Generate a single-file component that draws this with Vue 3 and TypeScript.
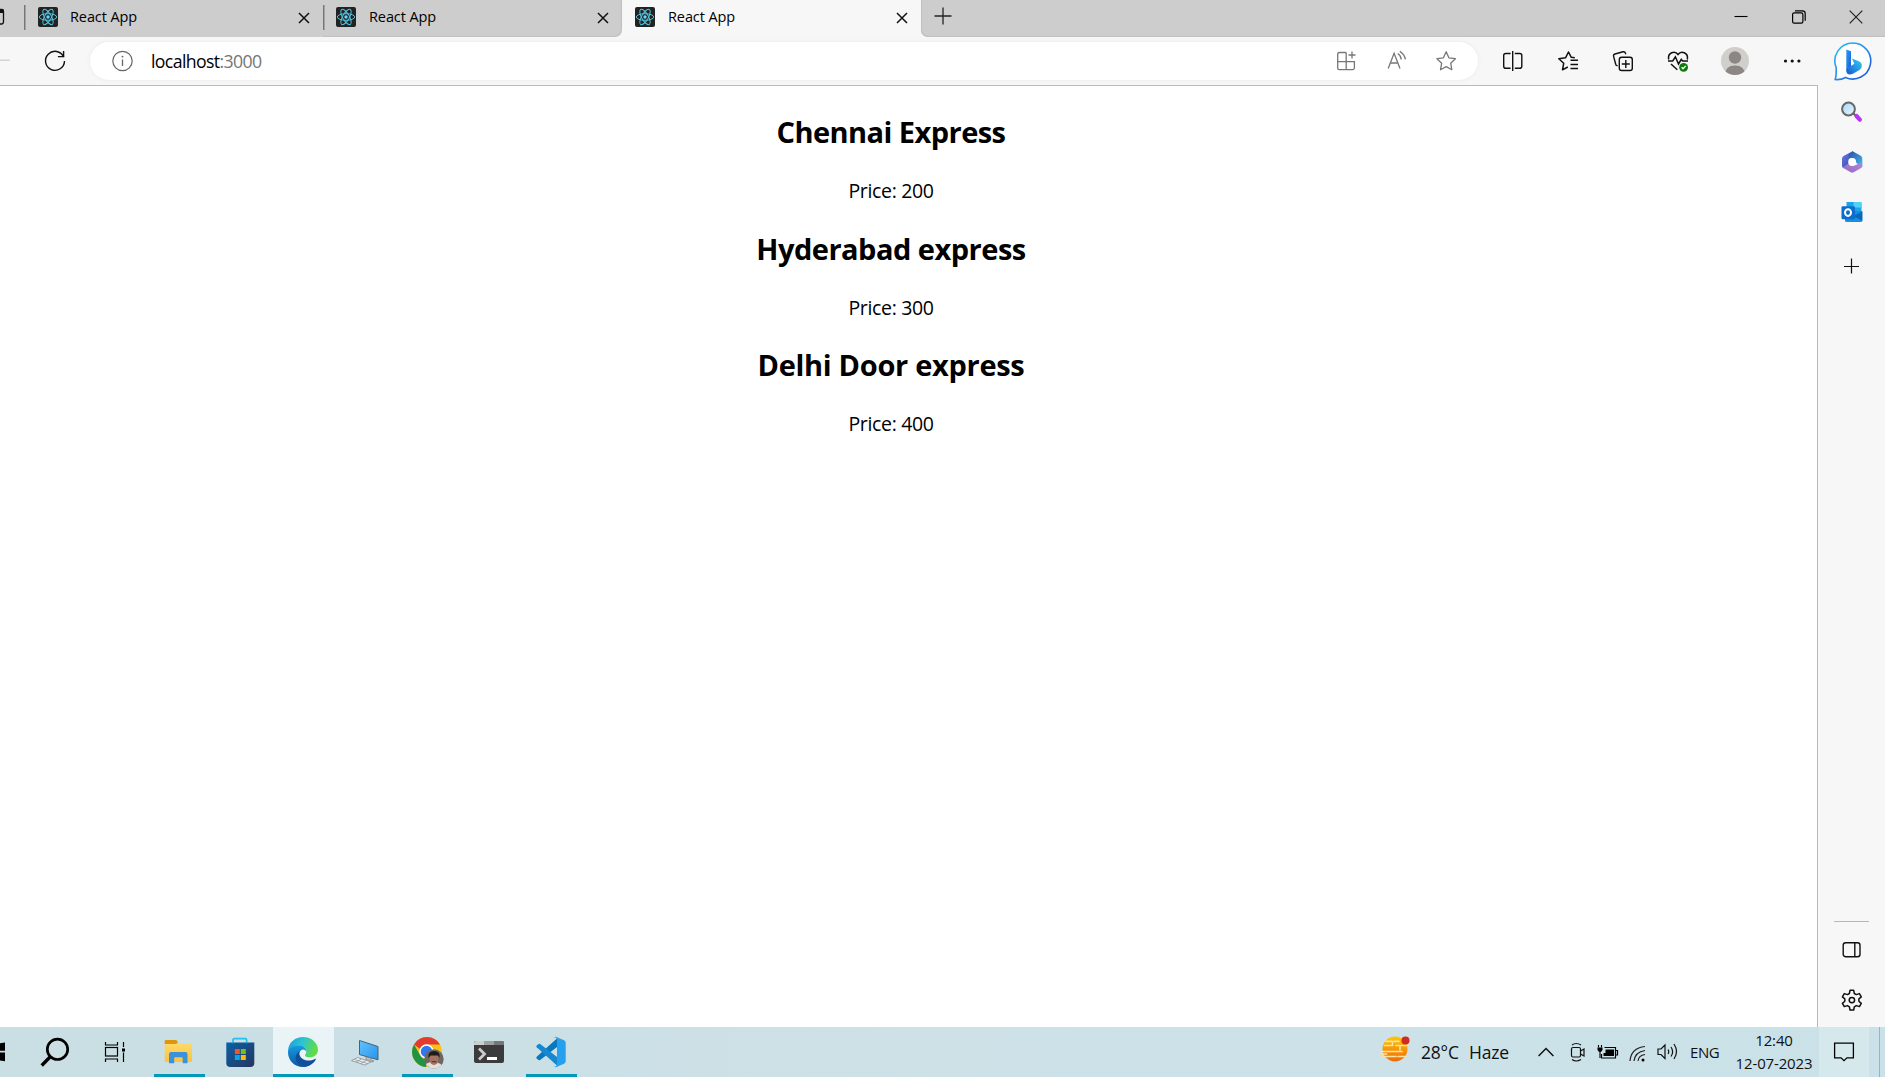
<script setup lang="ts">
interface Tab {
  title: string
  active: boolean
}

interface Train {
  name: string
  price: number
  spacing: string
}

const tabs: Tab[] = [
  { title: 'React App', active: false },
  { title: 'React App', active: false },
  { title: 'React App', active: true },
]

const trains: Train[] = [
  { name: 'Chennai Express', price: 200, spacing: 'first' },
  { name: 'Hyderabad express', price: 300, spacing: 'second' },
  { name: 'Delhi Door express', price: 400, spacing: 'third' },
]
</script>

<template>
  <div class="screen">
    <header class="titlebar">
      <div class="lead">
        <svg width="5" height="18" viewBox="0 0 5 18"><path d="M0 1.5h1.500Q3.500 1.500 3.500 4v9.500Q3.500 16 1.500 16H0" fill="none" stroke="#111" stroke-width="1.300" /><path d="M0 1h3.500v4H0z" fill="#111" /></svg>
      </div>
      <div v-for="(tab, i) in tabs" :key="i" class="tab" :class="{ active: tab.active, before: i === 1 }">
        <svg class="favicon" width="20" height="20" viewBox="0 0 20 20">
          <rect width="20" height="20" rx="2" fill="#222" />
          <g fill="none" stroke="#53c1de" stroke-width="1">
            <ellipse cx="10" cy="10" rx="8.700" ry="3.300" />
            <ellipse cx="10" cy="10" rx="8.700" ry="3.300" transform="rotate(60 10 10)" />
            <ellipse cx="10" cy="10" rx="8.700" ry="3.300" transform="rotate(120 10 10)" />
          </g>
          <circle cx="10" cy="10" r="1.700" fill="#61dafb" />
        </svg>
        <span class="tab-title">{{ tab.title }}</span>
        <svg class="tab-close" width="12" height="12" viewBox="0 0 12 12"><path d="M1 1l10 10M11 1L1 11" stroke="#111" stroke-width="1.500" /></svg>
      </div>
      <div class="strip-end">
        <svg class="new-tab" width="18" height="18" viewBox="0 0 18 18"><path d="M9 .5v17M.5 9h17" stroke="#222" stroke-width="1.300" /></svg>
        <div class="window-buttons">
          <svg width="14" height="14" viewBox="0 0 14 14"><path d="M.5 6.500h13" stroke="#000" stroke-width="1.100" /></svg>
          <svg width="14" height="14" viewBox="0 0 14 14"><rect x=".6" y="2.900" width="10.300" height="10.300" rx="1.600" fill="none" stroke="#000" stroke-width="1.200" /><path d="M3 .8h7.500q2.700 0 2.700 2.700v7.300" fill="none" stroke="#000" stroke-width="1.200" /></svg>
          <svg width="14" height="14" viewBox="0 0 14 14"><path d="M.7.700l12.600 12.600M13.300.700L.7 13.300" stroke="#222" stroke-width="1.200" /></svg>
        </div>
      </div>
    </header>

    <div class="toolbar">
      <svg class="back" width="10" height="24" viewBox="0 0 10 24"><path d="M0 11.200h10" stroke="#cfcfcf" stroke-width="1.300" /></svg>
      <svg class="refresh" width="24" height="24" viewBox="0 0 24 24"><g fill="none" stroke="#111" stroke-width="1.400"><path d="M20.700 8A9.500 9.500 0 1 0 21.500 12" /><path d="M20.600 2v5.600h-5.700" /></g></svg>
      <div class="address">
        <svg width="24" height="24" viewBox="0 0 24 24"><circle cx="12.500" cy="12" r="9.700" fill="none" stroke="#666" stroke-width="1.200" /><path d="M12.500 10.500v6.500" stroke="#666" stroke-width="1.300" /><circle cx="12.500" cy="7.700" r=".9" fill="#666" /></svg>
        <span class="url">localhost<span class="port">:3000</span></span>
        <div class="address-icons">
          <svg width="24" height="24" viewBox="0 0 24 24" fill="none" stroke="#777" stroke-width="1.300"><path d="M12.200 3.500H5.400q-1.700 0-1.700 1.700v14q0 1.400 1.500 1.400h13.700q1.500 0 1.500-1.500v-6.500H3.700M12.200 3.500v17.100M18 2.500v7M14.500 6h7" /></svg>
          <svg width="24" height="24" viewBox="0 0 24 24" fill="none" stroke="#777" stroke-width="1.300"><path d="M4.200 19.600L10.100 4.300l5.900 15.300M6.400 14h7.500M13.800 4.500q3.100 2 3.500 6M15.800 2.400q4.800 3 5.600 8" /></svg>
          <svg width="24" height="24" viewBox="0 0 24 24"><path d="M12.200 2.800l2.700 6 6.500.9-4.700 4.500 1.100 6.500-5.600-3.100-5.700 3.100 1.200-6.500L2.900 9.700l6.500-.9z" fill="none" stroke="#777" stroke-width="1.300" stroke-linejoin="round" /></svg>
        </div>
      </div>
      <div class="actions">
        <svg width="24" height="24" viewBox="0 0 24 24" fill="none" stroke="#111" stroke-width="1.400"><path d="M9.600 4.500H4.800Q2.700 4.500 2.700 6.600v10.600q0 2.100 2.100 2.100h4.800M13.800 4.500h4.900q2.100 0 2.100 2.100v10.600q0 2.100-2.100 2.100h-4.900M11.700 2v20" /></svg>
        <svg width="24" height="24" viewBox="0 0 24 24" fill="none" stroke="#111" stroke-width="1.500"><path d="M18.800 8.800l-3.500-.5L12.500 3 9.500 8.800l-6.700.9 4.900 4.600-1.200 6.500 5.300-2.800M14.500 11.300H22M14.500 15.500H22M14.500 19.500H22" stroke-linejoin="round" /></svg>
        <svg width="24" height="24" viewBox="0 0 24 24" fill="none" stroke="#111" stroke-width="1.400"><rect x="8.300" y="8.300" width="13" height="13.200" rx="2.300" /><path d="M14.800 11v8M10.800 15h8M14.800 5.300l-.4-1.200q-.5-1.800-2.400-1.300L4 5q-1.900.5-1.400 2.400l2.100 7.800q.5 1.700 2 1.400" /></svg>
        <svg width="24" height="24" viewBox="0 0 24 24" fill="none" stroke="#111" stroke-width="1.500"><path d="M2.700 10.500C1.300 3.500 9 1.300 12 5.500c3-4.200 10.700-2 9.300 5M2 11.900h4.700l2.700-4.100 3.100 7.200 2.800-4.700 1.300 1.600H22M5 15l6.300 5.800" /><circle cx="17.600" cy="18.300" r="4.400" fill="#0c7a0c" stroke="none" /><path d="M15.600 18.300l1.400 1.500 2.800-2.900" stroke="#fff" stroke-width="1.300" /></svg>
        <svg width="28" height="28" viewBox="0 0 28 28"><defs><clipPath id="avatar"><circle cx="14" cy="14" r="14" /></clipPath></defs><g clip-path="url(#avatar)"><rect width="28" height="28" fill="#d1cfcc" /><circle cx="14" cy="10.500" r="6.200" fill="#8b8785" /><path d="M4 28q0-9.500 10-9.500T24 28z" fill="#8b8785" /></g></svg>
        <svg width="24" height="24" viewBox="0 0 24 24" fill="#111"><circle cx="5.500" cy="12" r="1.600" /><circle cx="12.200" cy="12" r="1.600" /><circle cx="18.900" cy="12" r="1.600" /></svg>
        <svg class="bing" width="40" height="40" viewBox="0 0 40 40">
          <defs>
            <linearGradient id="ring" x1="0" y1="0" x2="1" y2="1"><stop offset="0" stop-color="#25c3ee" /><stop offset=".5" stop-color="#2788ef" /><stop offset="1" stop-color="#1a4fd0" /></linearGradient>
            <linearGradient id="bee" x1="0" y1="0" x2="1" y2="1"><stop offset="0" stop-color="#2d9cf0" /><stop offset="1" stop-color="#1758d5" /></linearGradient>
            <linearGradient id="beeTail" x1="0" y1="1" x2="1" y2="0"><stop offset="0" stop-color="#1656d8" /><stop offset="1" stop-color="#36d1ee" /></linearGradient>
          </defs>
          <path d="M20 2A18 18 0 1 1 12.500 36.500Q8 39 2.200 38.500Q3.400 35 3.200 26.800A18 18 0 0 1 20 2z" fill="#fff" stroke="url(#ring)" stroke-width="1.600" />
          <path d="M13.300 8.500l4.700 1.800v17.200l-4.700 3z" fill="url(#bee)" />
          <path d="M13.400 27.800l8-5-2.500-5.200 7 2.600q4 1.900 2.600 6.300-1 2-2.800 3l-6.300 3.600Q13.400 34.500 13.400 30z" fill="url(#beeTail)" />
        </svg>
      </div>
    </div>

    <div class="body">
      <main class="page">
        <section v-for="train in trains" :key="train.name" class="train">
          <h2 :class="train.spacing">{{ train.name }}</h2>
          <p>Price: {{ train.price }}</p>
        </section>
      </main>
      <aside class="sidebar">
        <svg width="24" height="24" viewBox="0 0 24 24"><defs><linearGradient id="lens" x1="0" y1="0" x2="1" y2="1"><stop offset="0" stop-color="#a9d8f8" /><stop offset="1" stop-color="#e6f6ff" /></linearGradient></defs><path d="M13.500 13.500l3 3" stroke="#555" stroke-width="2" /><circle cx="8.500" cy="9" r="6.400" fill="url(#lens)" stroke="#686868" stroke-width="2" /><path d="M16.500 16l3.300 3.600" stroke="#b837f5" stroke-width="4.300" stroke-linecap="round" /></svg>
        <svg width="24" height="24" viewBox="0 0 24 24">
          <defs><linearGradient id="m1" x1="0" y1="0" x2="1" y2="1"><stop offset="0" stop-color="#6a7be8" /><stop offset="1" stop-color="#2d459e" /></linearGradient><linearGradient id="m2" x1="0" y1="0" x2="1" y2="1"><stop offset="0" stop-color="#294fa5" /><stop offset="1" stop-color="#44bff0" /></linearGradient><linearGradient id="m3" x1="0" y1="1" x2="1" y2="0"><stop offset="0" stop-color="#8c6bc8" /><stop offset="1" stop-color="#bb83d3" /></linearGradient></defs>
          <path d="M12.500 1.300L3.500 6Q2 7 2 8.500v7.200q0 1.800 1.500 2.500l5.200-4.400V9l6-6z" fill="url(#m1)" />
          <path d="M12.500 1.300l8.300 4.500Q22.300 6.700 22.300 8.500v9l-6.600-5.300q0-4.200-4.400-4.200L8.700 9V4.300z" fill="url(#m2)" />
          <path d="M2.500 17.500l6.200-3.700q1 2.300 4 2.100l9.500-3.400v3.300q0 1.600-1.500 2.500l-7 3.900q-1.500.9-3 0l-7-3.900q-1-.3-1.200-.8z" fill="url(#m3)" />
          <circle cx="12.200" cy="12" r="3.900" fill="#fff" />
        </svg>
        <svg width="24" height="24" viewBox="0 0 24 24"><path d="M6.500 2h14q1 0 1 1v8h-15z" fill="#1aa5e8" /><path d="M13.500 2h7q1 0 1 1v4.500h-8z" fill="#4fd2f8" /><path d="M5 11h17.300v9.500q0 1.500-1.500 1.500H6.500Q5 22 5 20.500z" fill="#1490df" /><path d="M22.300 11.500v9.300L13 16z" fill="#0a66b8" /><rect x="1.500" y="6.200" width="13.500" height="13" rx="1.300" fill="#0c6dcc" /><ellipse cx="8" cy="12.600" rx="3" ry="3.300" fill="none" stroke="#fff" stroke-width="2" /></svg>
        <svg class="add" width="24" height="24" viewBox="0 0 24 24"><path d="M11.500 4.500v15M4 12.500h15" stroke="#111" stroke-width="1.200" /></svg>
        <div class="divider"></div>
        <svg width="24" height="24" viewBox="0 0 24 24" fill="none" stroke="#111" stroke-width="1.400"><rect x="3.200" y="4.700" width="16.800" height="14" rx="2.500" /><path d="M14.800 4.700v14" /></svg>
        <svg width="24" height="24" viewBox="0 0 24 24" fill="none" stroke="#111" stroke-width="1.500" stroke-linejoin="round"><path d="M10 2.300h3.700l.6 3.200 2 1.100 3.100-1 1.900 3.200-2.400 2v2.500l2.400 2.100-1.900 3.200-3.100-1-2 1.200-.6 3.200H10l-.6-3.200-2-1.200-3.100 1-1.900-3.200 2.400-2.100v-2.500l-2.400-2 1.900-3.200 3.100 1 2-1.100z" /><circle cx="11.900" cy="12.100" r="2.700" /></svg>
      </aside>
    </div>

    <footer class="taskbar">
      <div class="cell start"><svg width="5" height="32" viewBox="0 0 5 32"><path d="M0 7.300L5 6.500v8.300H0zM0 16.500h5v8.800l-5-.8z" fill="#000" /></svg></div>
      <div class="cell search"><svg width="32" height="32" viewBox="0 0 32 32" fill="none" stroke="#000"><circle cx="18.500" cy="13.300" r="10.200" stroke-width="2.700" /><path d="M11.500 20.500L2.700 29.500" stroke-width="3.300" /></svg></div>
      <div class="cell view"><svg width="32" height="32" viewBox="0 0 32 32" fill="none" stroke="#000" stroke-width="1.200"><rect x="6.500" y="11.500" width="12" height="8.500" /><path d="M6.500 6v3h12V6M6.500 26v-3h12v3M24.500 6v5M24.500 16.500V26" /><path d="M23 12.500h3v3h-3z" fill="#000" stroke="none" /></svg></div>
      <div class="cell wide explorer running"><svg width="32" height="32" viewBox="0 0 32 32"><defs><linearGradient id="folder" x1="0" y1="0" x2="0" y2="1"><stop offset="0" stop-color="#ffdc70" /><stop offset="1" stop-color="#f9c440" /></linearGradient></defs><path d="M1.700 5.300q0-1.300 1.300-1.300h10l2.500 3.500H28q1 0 1 1V25q0 1-1 1H3q-1.300 0-1.300-1z" fill="url(#folder)" /><path d="M1.700 8V5.300Q1.700 4 3 4h9.500q1 0 1.700 1l.8 1.500L13 8z" fill="#dc9611" /><path d="M6 27.300V18q0-2 2-2h14.500q2 0 2 2v9.300h-4.800v-5q0-1-1-1h-6.500q-1 0-1 1v5z" fill="#3c91dc" /></svg></div>
      <div class="cell store"><svg width="32" height="32" viewBox="0 0 32 32"><defs><linearGradient id="bag" x1="0" y1="0" x2="1" y2="1"><stop offset="0" stop-color="#0962a9" /><stop offset="1" stop-color="#27345c" /></linearGradient></defs><path d="M9 7V4q0-1.300 1.300-1.300h11Q22.600 2.700 22.600 4v3" fill="none" stroke="#23bff1" stroke-width="1.700" /><path d="M2.300 6.500h28V27q0 4-4 4h-20q-4 0-4-4z" fill="url(#bag)" /><path d="M9 7.300V6.500M22.600 7.300V6.500" stroke="#23bff1" stroke-width="1.700" /><path d="M10.800 13h5v5h-5z" fill="#f35325" /><path d="M16.800 13h5v5h-5z" fill="#81bc06" /><path d="M10.800 19h5v5h-5z" fill="#05a6f0" /><path d="M16.800 19h5v5h-5z" fill="#ffba08" /></svg></div>
      <div class="cell edge running"><svg width="32" height="32" viewBox="0 0 32 32">
        <defs><linearGradient id="e1" x1="0" y1="0" x2="1" y2=".3"><stop offset="0" stop-color="#1699df" /><stop offset=".5" stop-color="#2cc3d3" /><stop offset="1" stop-color="#62dc46" /></linearGradient><linearGradient id="e2" x1="0" y1="0" x2="0" y2="1"><stop offset="0" stop-color="#169bdf" /><stop offset="1" stop-color="#0c59a6" /></linearGradient></defs>
        <path d="M1 15C1.500 6 8.500 1 16 1c9 0 15 6.500 15 12.500 0 5-3.700 7.800-8 7.800-3.800 0-5-1-5-2 0-1 1.300-1.300 1.300-3.800 0-3-3.200-6-7.500-6C7 9.500 3 11.500 1 15z" fill="url(#e1)" />
        <path d="M1 15c2-4 6-5.700 10.500-5.700 4.500 0 7.800 3 7.800 6.200-1-1.500-2.500-2.500-4.300-1.700-3 1.500-4 5-2.500 8.500 2 5 8 6 14 3.200C23.800 29.300 20 31 16 31 7.500 31 .5 24.500 1 15z" fill="url(#e2)" />
        <path d="M13 14.800c-3.500 2-6 7-3 11.500 2.300 3.500 6 4.700 9 4.300 4-.8 7.400-3.100 9.600-6.600.5-.8 0-1.400-.8-1-6 3-13 1.400-15-3.500-.7-1.800-.6-3.500.2-4.700z" fill="#104f99" />
      </svg></div>
      <div class="cell pc"><svg width="32" height="32" viewBox="0 0 32 32"><defs><linearGradient id="panel" x1="0" y1="0" x2="1" y2="1"><stop offset="0" stop-color="#64c2ff" /><stop offset="1" stop-color="#2594eb" /></linearGradient></defs><path d="M10.500 4.500l18.500 6v13.300l-18.500-5.200z" fill="url(#panel)" stroke="#4c6170" stroke-width="1" /><path d="M17 21v3l6 2 2-1-3-1v-2z" fill="#b6bdc0" stroke="#777" stroke-width=".6" /><path d="M8.500 21.500l13.500 4.300-6 3.300-13.500-4.500z" fill="#eceff1" stroke="#848b90" stroke-width=".8" /><path d="M5.500 23.500l13.500 4.200M12.500 23l-5.500 3M17 24.500l-5.500 3.200" stroke="#8f979b" stroke-width=".8" /></svg></div>
      <div class="cell wide chrome running"><svg width="34" height="34" viewBox="0 0 34 34">
        <defs><clipPath id="user"><circle cx="24" cy="24" r="9.700" /></clipPath></defs>
        <circle cx="17" cy="17" r="15" fill="#fbc116" /><path d="M4 9.500A15 15 0 0 1 30 9.500H17A7.500 7.500 0 0 0 10 14z" fill="#e33b2e" /><path d="M4 9.500l6.500 11.300A7.500 7.500 0 0 0 18 24.500l-2 7.500A15 15 0 0 1 4 9.500z" fill="#229342" />
        <circle cx="16.500" cy="16.500" r="7.200" fill="#fff" /><circle cx="16.500" cy="16.500" r="5.700" fill="#2f79ed" />
        <g clip-path="url(#user)"><path d="M14 14h20v20H14z" fill="#70665f" /><path d="M14 34q0-7 9-7t11 7z" fill="#e5dfdb" /><ellipse cx="24" cy="24" rx="4.500" ry="6" fill="#a17360" /><path d="M18.500 23q-1-7 5.500-7t5.500 7l-1.500-2.500h-7.500z" fill="#1d1b1c" /><path d="M21.700 27q2.300-1 4.600 0" stroke="#4f3028" stroke-width="1.200" fill="none" /></g>
      </svg></div>
      <div class="cell terminal"><svg width="32" height="32" viewBox="0 0 32 32"><path d="M1 7q0-2 2-2h26q2 0 2 2v18q0 2-2 2H3q-2 0-2-2z" fill="#3b3b3b" /><path d="M1 9V7q0-2 2-2h8v4z" fill="#cecece" /><path d="M11 5h10v4H11z" fill="#a0a0a0" /><path d="M21 5h8q2 0 2 2v2H21z" fill="#777" /><path d="M6 12.500l5.500 5.500L6 23.500" fill="none" stroke="#ccc" stroke-width="2.800" /><path d="M14 21h10v3H14z" fill="#fff" /></svg></div>
      <div class="cell wide code running"><svg width="32" height="32" viewBox="0 0 32 32"><path d="M23 1.500L1.700 20.700q-.8.900 0 1.700l1.800 1.600q.8.600 1.700 0L24 9.500z" fill="#0879be" /><path d="M23 30.500L1.700 11.300q-.8-.9 0-1.700L3.500 8q.8-.6 1.700 0L24 22.500z" fill="#1588cf" /><path d="M21.500 1l7.500 3.300q1.700.8 1.700 2.300v18.800q0 1.500-1.700 2.300L21.500 31q-1.500.5-2.500-.7 3 1 3-2V3.700q0-3-3-2 1-1.200 2.500-.7z" fill="#24a0ee" /></svg></div>

      <div class="tray">
        <svg class="weather" width="32" height="32" viewBox="0 0 32 32"><defs><linearGradient id="sun" x1="0" y1="0" x2="0" y2="1"><stop offset="0" stop-color="#ffc704" /><stop offset="1" stop-color="#ed6a0c" /></linearGradient></defs><circle cx="16" cy="15" r="12.500" fill="url(#sun)" /><g stroke="#ffe2a0" stroke-width="1.700" stroke-linecap="round"><path d="M7 7.300h6M15 7.300h5M5.500 11.500h8M17 11.500h11" /><path d="M2 17.500h21M4 22.500h13M19 22.500h8M1.500 20h6" /></g><path d="M13.500 7v4.500M21 11.500v5" stroke="#ffe2a0" stroke-width="1.500" /><circle cx="26.500" cy="6.500" r="4" fill="#cf2b20" /></svg>
        <span class="temp">28°C</span><span class="haze">Haze</span>
        <svg class="chevron" width="16" height="12" viewBox="0 0 16 12"><path d="M.6 10L8 2.500l7.400 7.500" fill="none" stroke="#111" stroke-width="1.500" /></svg>
        <svg class="meet" width="16" height="20" viewBox="0 0 16 20" fill="none" stroke="#111" stroke-width="1.200"><rect x="1.500" y="5.500" width="9" height="9.500" rx="1.500" /><path d="M10.500 9l3.500-2v7l-3.500-2M2 3q4-3 9 0M2 17.500q4 3 9 0" /></svg>
        <svg class="battery" width="22" height="16" viewBox="0 0 22 16"><path d="M7.500 3.500h11v10.500H4.500V10M19 6.500h1.500v4.500H19" fill="none" stroke="#000" stroke-width="1.200" /><path d="M8.500 5.500h8.500v6.500H6.500V9h2z" /><path d="M1.500 1v2.500M4.500 1v2.500M3 7v7" stroke="#000" stroke-width="1.100" /><path d="M.5 3.500h5v2.500q-1 2-2.500 2T.5 6z" /></svg>
        <svg class="wifi" width="17" height="17" viewBox="0 0 17 17" fill="none" stroke="#222" stroke-width="1.200"><path d="M1 16Q2 3 16 1.500M5 16Q6 7 16 5.500M9 16q.5-5.500 7-6.500" /><circle cx="14" cy="15" r="1.500" fill="#000" stroke="none" /></svg>
        <svg class="sound" width="22" height="20" viewBox="0 0 22 20" fill="none" stroke="#111" stroke-width="1.200"><path d="M1 7h3l4-4v13.500l-4-4H1zM11 7.500q1.500 2.300 0 4.500M14 5q3.300 4.700 0 9.500M17 2q5 7.500 0 15" /></svg>
        <span class="lang">ENG</span>
        <div class="clock"><span class="time">12:40</span><span class="date">12-07-2023</span></div>
        <div class="notify"><svg width="22" height="22" viewBox="0 0 22 22"><path d="M1.600 2.100h18.800v14.800h-6.500l-2.900 2.800-2.900-2.800H1.600z" fill="none" stroke="#000" stroke-width="1.300" /></svg></div>
        <div class="peek"></div>
      </div>
    </footer>
  </div>
</template>

<style>
body { margin: 0; overflow: hidden; }
</style>

<style scoped>
.screen { width: 1885px; height: 1077px; display: flex; flex-direction: column; overflow: hidden; background: #fff; color: #000; font-family: "Open Sans", "Noto Sans", sans-serif; }
svg { display: block; flex: none; }
span { white-space: nowrap; }

.titlebar { height: 37px; flex: none; display: flex; background: #f7f7f7; }
.lead { width: 24px; height: 37px; flex: none; background: #cdcdcd; box-sizing: border-box; padding-top: 8px; }
.tab { width: 299px; height: 37px; flex: none; box-sizing: border-box; display: flex; align-items: flex-start; background: #cdcdcd; padding: 0 13px 0 14px; }
.tab + .tab { padding-left: 13px; }
.tab:not(.active) { background: linear-gradient(#777, #777) 0 5px / 1.500px 25px no-repeat, #cdcdcd; }
.tab.before { border-bottom-right-radius: 7px; box-shadow: inset -1px -1px 1px #c0c0c0; }
.tab.active { background: #f7f7f7; }
.favicon { margin-top: 7px; }
.tab-title { margin-left: 12px; font-size: 14.500px; line-height: 20px; margin-top: 7px; letter-spacing: -.1px; }
.tab + .tab .tab-title { margin-left: 13px; }
.tab-close { margin: 12px 0 0 auto; }
.strip-end { flex: 1; display: flex; background: #cdcdcd; border-bottom-left-radius: 7px; box-shadow: inset 1px -1px 1px #c0c0c0; }
.new-tab { margin: 7px 0 0 13px; }
.window-buttons { margin: 10px 22px 0 auto; display: flex; gap: 43.500px; }

.toolbar { height: 48px; flex: none; display: flex; align-items: center; background: #f7f7f7; }
.refresh { margin-left: 33px; }
.address { width: 1388px; height: 38px; margin-left: 23px; box-sizing: border-box; padding: 0 20px 0 20px; border-radius: 19px; background: #fff; display: flex; align-items: center; flex: none; box-shadow: 0 0 4px #e9e9e9; }
.url { margin: -1px 0 0 17px; font-size: 17.700px; line-height: 24px; letter-spacing: -.62px; }
.port { color: #767676; }
.address-icons { display: flex; gap: 26px; margin-left: auto; }
.actions { display: flex; align-items: center; gap: 31px; margin-left: 23px; }
.bing { margin-left: -2.500px; }

.body { flex: 1; display: flex; min-height: 0; background: #f7f7f7; }
.page { width: 1818px; box-sizing: border-box; border-top: 1px solid #b9b9b9; border-right: 1px solid #b9b9b9; background: #fff; padding: 26px 35px 0 0; text-align: center; flex: none; }
.train { height: 116.500px; }
.train h2 { margin: 0; font-size: 29px; line-height: 40px; font-weight: 700; }
.train .first { letter-spacing: -.55px; }
.train .second { letter-spacing: -.5px; }
.train .third { letter-spacing: -.3px; }
.train p { margin: 25px 0 0; font-size: 19.500px; line-height: 27px; letter-spacing: -.34px; }
.sidebar { width: 67px; box-sizing: border-box; display: flex; flex-direction: column; align-items: center; gap: 26px; padding: 15px 0; }
.add { margin-top: 4px; }
.divider { width: 35px; height: 1px; background: #b8b8b8; margin: auto 0 -10px; }

.taskbar { height: 50px; flex: none; display: flex; background: linear-gradient(90deg, #c9dfe4, #cde1e7 50%, #cbe1e9); }
.cell { height: 50px; display: flex; align-items: center; justify-content: center; box-sizing: border-box; flex: none; }
.running { box-shadow: inset 0 -3px #0099bc; }
.start { width: 24px; justify-content: flex-start; }
.search { width: 62px; }
.view { width: 58px; }
.wide { width: 51px; }
.explorer { margin-left: 10px; padding-right: 1px; }
.store { width: 53px; margin-left: 9px; padding-right: 1px; }
.edge { width: 61px; margin-left: 6px; background: #eaf3f6; padding-right: 1px; }
.pc { width: 50px; margin-left: 6px; }
.chrome { margin-left: 12px; padding-right: 1px; }
.terminal { width: 50px; margin-left: 11px; }
.code { margin-left: 12px; padding-right: 1px; }
.tray { flex: 1; display: flex; align-items: center; padding-left: 803px; color: #111; }
.weather { margin: -4px 0 0 -1px; }
.temp { width: 48px; margin-left: 10px; font-size: 17.500px; letter-spacing: -.2px; }
.haze { width: 69px; font-size: 17.500px; letter-spacing: -.2px; }
.meet { margin-left: 16px; }
.battery { margin-left: 11px; }
.wifi { margin-left: 10px; margin-top: 2px; }
.sound { margin-left: 11px; }
.lang { width: 41px; margin-left: 11px; font-size: 15px; letter-spacing: -.4px; }
.clock { width: 86px; display: flex; flex-direction: column; align-items: center; font-size: 15px; line-height: 23px; letter-spacing: -.15px; }
.notify { width: 50px; height: 50px; margin-left: 2px; display: flex; align-items: center; justify-content: center; background: #d5e8ec; }
.peek { width: 5px; height: 50px; margin-left: 10px; border-left: 1px solid #9fb1b8; }
</style>
